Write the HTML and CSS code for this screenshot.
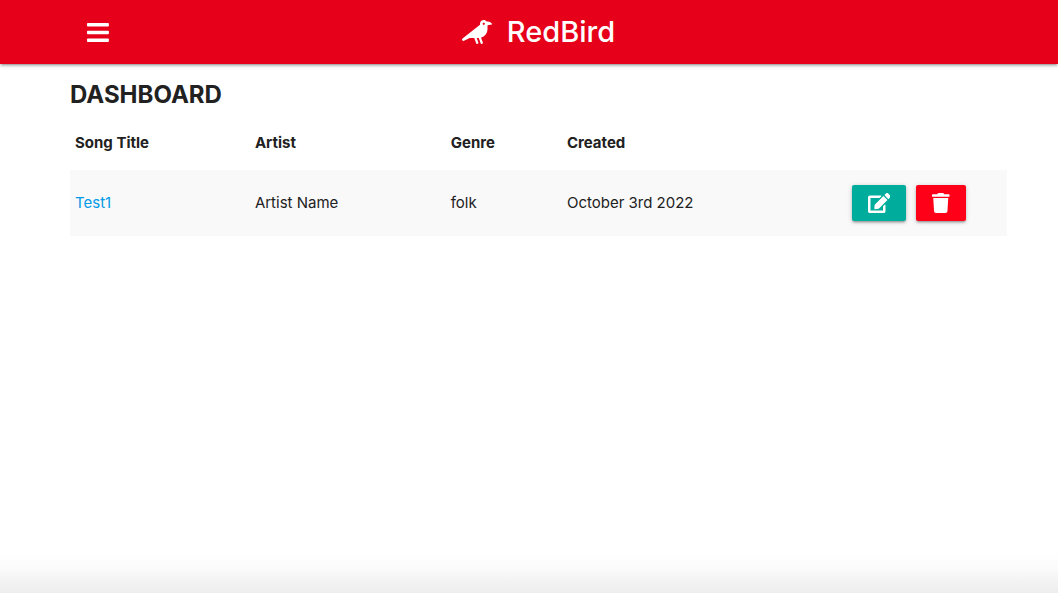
FILE: index.html
```html
<!DOCTYPE html>
<html lang="en">
<head>
<meta charset="utf-8">
<meta name="viewport" content="width=device-width, initial-scale=1">
<title>RedBird</title>
<link rel="stylesheet" href="styles.css">
</head>
<body>
<header class="navbar">
  <button class="menu-button" type="button" aria-label="Open menu">
    <svg class="icon-bars" viewBox="0 0 448 512" aria-hidden="true"><path d="M16 132h416c8.837 0 16-7.163 16-16V76c0-8.837-7.163-16-16-16H16C7.163 60 0 67.163 0 76v40c0 8.837 7.163 16 16 16zm0 160h416c8.837 0 16-7.163 16-16v-40c0-8.837-7.163-16-16-16H16c-8.837 0-16 7.163-16 16v40c0 8.837 7.163 16 16 16zm0 160h416c8.837 0 16-7.163 16-16v-40c0-8.837-7.163-16-16-16H16c-8.837 0-16 7.163-16 16v40c0 8.837 7.163 16 16 16z"/></svg>
  </button>
  <a class="brand" href="#">
    <svg class="icon-bird" viewBox="0 0 640 512" aria-hidden="true"><path d="M544 32h-16.36C513.04 12.68 490.09 0 464 0c-44.18 0-80 35.82-80 80v20.98L12.09 393.57A30.216 30.216 0 0 0 0 417.74c0 22.46 23.64 37.07 43.73 27.03L165.27 384h96.49l44.41 120.1c2.27 6.23 9.15 9.44 15.38 7.17l22.55-8.21c6.23-2.27 9.44-9.15 7.17-15.38L312.94 384H352c1.91 0 3.76-.23 5.66-.29l44.51 120.38c2.27 6.23 9.15 9.44 15.38 7.17l22.55-8.21c6.23-2.27 9.44-9.15 7.17-15.38l-41.24-111.54C485.74 352.8 544 279.26 544 192v-80l96-16c0-35.35-42.98-64-96-64zm-80 72c-13.25 0-24-10.75-24-24 0-13.26 10.75-24 24-24s24 10.74 24 24c0 13.25-10.75 24-24 24z"/></svg>
    <span>RedBird</span>
  </a>
</header>
<main class="content">
  <h1 class="page-title">DASHBOARD</h1>
  <table class="songs">
    <colgroup><col class="col-title"><col class="col-artist"><col class="col-genre"><col class="col-created"><col></colgroup>
    <thead>
      <tr><th scope="col">Song Title</th><th scope="col">Artist</th><th scope="col">Genre</th><th scope="col">Created</th><td></td></tr>
    </thead>
    <tbody>
      <tr>
        <td><a class="song-link" href="#">Test1</a></td>
        <td>Artist Name</td>
        <td>folk</td>
        <td>October 3rd 2022</td>
        <td>
          <div class="actions">
            <button class="action action-edit" type="button" aria-label="Edit song">
              <svg class="icon-action" viewBox="0 0 576 512" aria-hidden="true"><path d="M402.6 83.2l90.2 90.2c3.8 3.8 3.8 10 0 13.8L274.4 405.6l-92.8 10.3c-12.4 1.4-22.9-9.1-21.5-21.5l10.3-92.8L388.8 83.2c3.8-3.8 10-3.8 13.8 0zm162-22.9l-48.8-48.8c-15.2-15.2-39.9-15.2-55.2 0l-35.4 35.4c-3.8 3.8-3.8 10 0 13.8l90.2 90.2c3.8 3.8 10 3.8 13.8 0l35.4-35.4c15.2-15.3 15.2-40 0-55.2zM384 346.2V448H64V128h229.8c3.2 0 6.2-1.3 8.5-3.5l40-40c7.6-7.6 2.2-20.5-8.5-20.5H48C21.5 64 0 85.5 0 112v352c0 26.5 21.5 48 48 48h352c26.5 0 48-21.5 48-48V306.2c0-10.7-12.9-16-20.5-8.5l-40 40c-2.2 2.3-3.5 5.3-3.5 8.5z"/></svg>
            </button>
            <button class="action action-delete" type="button" aria-label="Delete song">
              <svg class="icon-action" viewBox="0 0 448 512" aria-hidden="true"><path d="M432 32H312l-9.4-18.7A24 24 0 0 0 281.1 0H166.8a23.72 23.72 0 0 0-21.4 13.3L136 32H16A16 16 0 0 0 0 48v32a16 16 0 0 0 16 16h416a16 16 0 0 0 16-16V48a16 16 0 0 0-16-16zM53.2 467a48 48 0 0 0 47.9 45h245.8a48 48 0 0 0 47.9-45L416 128H32z"/></svg>
            </button>
          </div>
        </td>
      </tr>
    </tbody>
  </table>
</main>
<footer class="page-shade"></footer>
</body>
</html>
```
FILE: styles.css
```css
* {
  box-sizing: border-box;
}

body {
  display: flex;
  flex-direction: column;
  min-height: 100vh;
  margin: 0;
  background: #fff;
  color: #212121;
  font-family: Inter, "Liberation Sans", sans-serif;
  font-size: 15px;
  line-height: 24px;
}

svg {
  display: block;
  fill: currentColor;
}

.navbar {
  display: grid;
  grid-template-columns: 1fr auto 1fr;
  align-items: center;
  height: 64px;
  padding: 0 51px 0 70px;
  background: #e60019;
  color: #fff;
  box-shadow: 0 2px 2px 0 rgba(0, 0, 0, .14), 0 3px 1px -2px rgba(0, 0, 0, .12), 0 1px 5px 0 rgba(0, 0, 0, .2);
}

.menu-button {
  justify-self: start;
  padding: 0 17px;
  border: 0;
  background: none;
  color: inherit;
}

.icon-bars {
  height: 25px;
}

.brand {
  display: flex;
  align-items: center;
  gap: 15px;
  color: inherit;
  font-size: 29px;
  font-weight: 500;
  line-height: 64px;
  text-decoration: none;
}

.icon-bird {
  height: 24px;
}

.content {
  flex: 1;
  padding: 15px 51px 0 70px;
}

.page-title {
  margin: 0;
  font-size: 24px;
  font-weight: 700;
  line-height: 32px;
}

.songs {
  width: 100%;
  margin-top: 5px;
  border-collapse: collapse;
  table-layout: fixed;
}

.col-title {
  width: 19.2%;
}

.col-artist {
  width: 20.9%;
}

.col-genre {
  width: 12.4%;
}

.col-created {
  width: 30.4%;
}

.songs th,
.songs td {
  padding: 15px 5px;
  text-align: left;
}

.songs th {
  font-weight: 700;
}

.songs tbody tr {
  background: #f9f9f9;
}

.song-link {
  color: #039be5;
  text-decoration: none;
}

.actions {
  display: flex;
  gap: 10px;
}

.action {
  height: 36px;
  padding: 0 16px;
  border: 0;
  border-radius: 2px;
  color: #fff;
  box-shadow: 0 2px 2px 0 rgba(0, 0, 0, .14), 0 3px 1px -2px rgba(0, 0, 0, .12), 0 1px 5px 0 rgba(0, 0, 0, .2);
}

.action-edit {
  background: #00ac9b;
}

.action-delete {
  background: #ff0019;
}

.icon-action {
  height: 20px;
}

.page-shade {
  height: 40px;
  background: linear-gradient(#fff, #fafafa 40%, #ededed);
}
```
